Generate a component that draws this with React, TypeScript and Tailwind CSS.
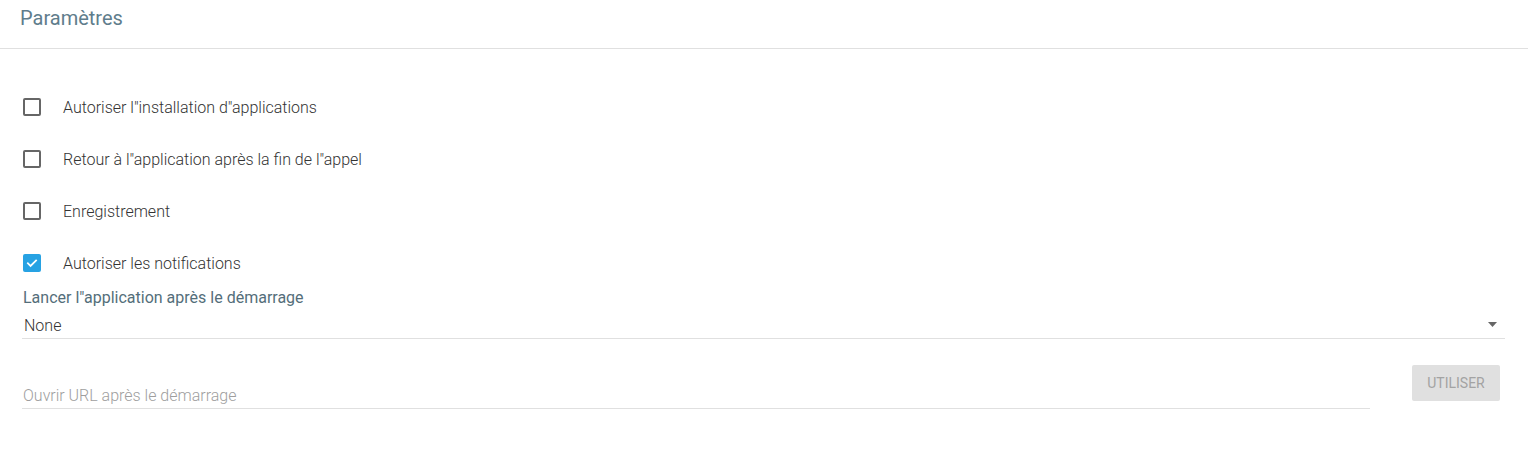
import React, { useState } from 'react';

const options = [
  { id: 'install', label: 'Autoriser l"installation d"applications', checked: false },
  { id: 'return', label: 'Retour à l"application après la fin de l"appel', checked: false },
  { id: 'record', label: 'Enregistrement', checked: false },
  { id: 'notif', label: 'Autoriser les notifications', checked: true },
];

const Checkbox = ({ checked, onChange }: { checked: boolean; onChange: () => void }) => (
  <button
    onClick={onChange}
    className={`w-[18px] h-[18px] rounded-[2px] flex items-center justify-center shrink-0 ${
      checked ? 'bg-[#27a2e3]' : 'border-2 border-[#666666]'
    }`}
  >
    {checked && (
      <svg width="14" height="14" viewBox="0 0 24 24" fill="none">
        <path d="M5 12.5l4.5 4.5L19 7.5" stroke="#ffffff" strokeWidth="3" strokeLinecap="square" />
      </svg>
    )}
  </button>
);

export default function App() {
  const [values, setValues] = useState(options);
  const [url, setUrl] = useState('');

  const toggle = (id: string) =>
    setValues(v => v.map(o => (o.id === id ? { ...o, checked: !o.checked } : o)));

  return (
    <div className="w-[1528px] h-[464px] bg-white font-['Roboto',sans-serif]">
      {/* Header */}
      <div className="h-[49px] border-b border-[#e0e0e0] px-5 pt-[6px]">
        <h1 className="text-[20px] leading-6 text-[#5f7d8c]">Paramètres</h1>
      </div>

      <div className="pl-[22px] pr-[23px] pt-[32px]">
        {values.map(o => (
          <div key={o.id} className="h-[52px] flex items-center pl-px">
            <Checkbox checked={o.checked} onChange={() => toggle(o.id)} />
            <span className="ml-[22px] mt-[2px] text-[16px] font-light text-[#333333]">{o.label}</span>
          </div>
        ))}

        {/* Startup app select */}
        <div className="-mt-[1px]">
          <div className="text-[16px] leading-5 text-[#546e7a] pl-px">Lancer l"application après le démarrage</div>
          <div className="mt-[1px] h-[30px] flex items-end justify-between border-b border-[#e0e0e0] pl-[2px] pr-[8px] pb-[2px]">
            <span className="text-[16px] leading-5 font-light text-[#333333]">None</span>
            <svg width="9" height="5" viewBox="0 0 9 5" className="mb-[9px]">
              <path d="M0 0h9L4.5 5z" fill="#666666" />
            </svg>
          </div>
        </div>

        {/* URL field */}
        <div className="flex items-start mt-[26px]">
          <div className="w-[1348px] pt-[19px]">
            <input
              value={url}
              onChange={e => setUrl(e.target.value)}
              placeholder="Ouvrir URL après le démarrage"
              className="w-full h-[24px] border-b border-[#e0e0e0] pl-px text-[16px] font-light text-[#333333] placeholder:text-[#9e9e9e] outline-none"
            />
          </div>
          <button
            disabled
            className="ml-[42px] w-[88px] h-[36px] rounded-[2px] bg-[#e0e0e0] text-[14px] text-[#a3a3a3] uppercase"
          >
            Utiliser
          </button>
        </div>
      </div>
    </div>
  );
}
